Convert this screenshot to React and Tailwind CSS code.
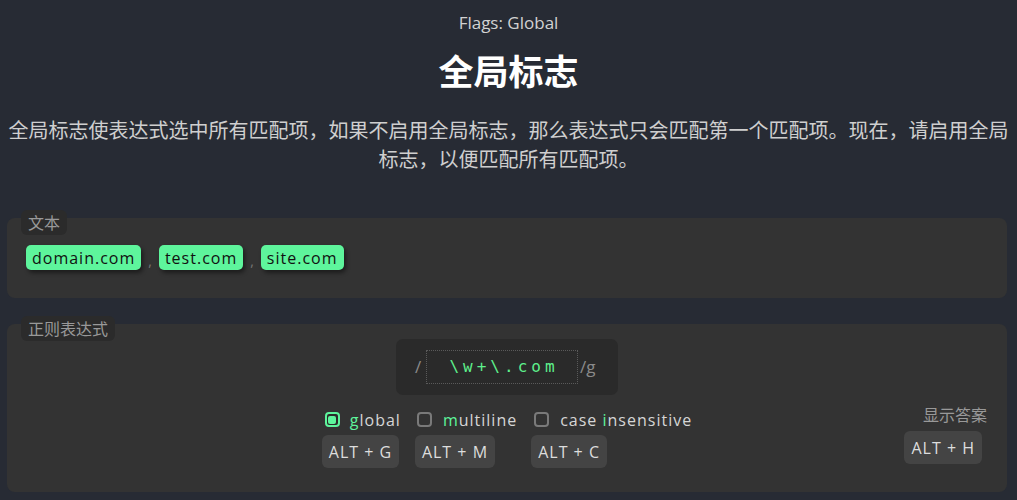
import React from "react";

const font = { fontFamily: '"Open Sans", "Noto Sans CJK SC", sans-serif' };

function Kbd({ children, className = "" }) {
  return (
    <span
      className={
        "inline-flex items-center h-[33px] px-[7px] rounded-[6px] bg-[#444444] text-[#dddddd] text-[16px] tracking-[1px] whitespace-pre " +
        className
      }
    >
      {children}
    </span>
  );
}

function Check({ checked }) {
  if (checked) {
    return (
      <span className="inline-flex w-[15px] h-[15px] rounded-[4px] border-2 border-[#5ef59c] p-[1.5px] bg-[#2b2b2b]">
        <span className="block w-full h-full rounded-[2px] bg-[#5ef59c]" />
      </span>
    );
  }
  return <span className="inline-block w-[15px] h-[15px] rounded-[4px] border-2 border-[#7a7a7a]" />;
}

function Chip({ children }) {
  return (
    <span className="inline-flex items-center h-[25px] px-[6px] rounded-[5px] bg-[#5ef59c] text-[#111] text-[16px] tracking-[1px] shadow-[2px_3px_4px_rgba(0,0,0,0.45)]">
      {children}
    </span>
  );
}

function Sep() {
  return <span className="text-[#777] text-[14px] mx-[7px] mt-[6px]">,</span>;
}

export default function App() {
  return (
    <div className="min-h-[500px] bg-[#272b34] px-[7px] pt-[11px] pb-[10px]" style={font}>
      <div className="text-center text-[17px] leading-[24px] text-[#d2d2d2]">Flags: Global</div>
      <h1 className="mt-[13px] text-center text-[35px] leading-[48px] font-bold text-white">全局标志</h1>
      <p className="mt-[20px] text-center text-[20px] leading-[29px] text-[#cfcfcf]">
        全局标志使表达式选中所有匹配项，如果不启用全局标志，那么表达式只会匹配第一个匹配项。现在，请启用全局标志，以便匹配所有匹配项。
      </p>

      <div className="relative mt-[44px] w-[1000px] h-[80px] rounded-[8px] bg-[#333333] pt-[26px] px-[19px]">
        <span className="absolute -top-[8px] left-[14px] h-[25px] px-[7px] flex items-center rounded-[6px] bg-[#2b2b2b] text-[16px] text-[#999999]">
          文本
        </span>
        <div className="flex items-center">
          <Chip>domain.com</Chip>
          <Sep />
          <Chip>test.com</Chip>
          <Sep />
          <Chip>site.com</Chip>
        </div>
      </div>

      <div className="relative mt-[26px] w-[1000px] h-[168px] rounded-[8px] bg-[#333333] pt-[15px]">
        <span className="absolute -top-[8px] left-[14px] h-[25px] px-[7px] flex items-center rounded-[6px] bg-[#2b2b2b] text-[16px] text-[#999999]">
          正则表达式
        </span>
        <div className="flex justify-center">
          <div className="flex items-center h-[56px] w-[222px] rounded-[7px] bg-[#2a2a2a] pl-[19px]">
            <span className="text-[#8a8a8a] text-[17px] w-[11px]">/</span>
            <div
              className="w-[152px] h-[34px] border border-dotted border-[#5a5a5a] flex items-center justify-center text-[#5ef08c] text-[16px] tracking-[4px] pl-[4px]"
              style={{ fontFamily: '"DejaVu Sans Mono", monospace' }}
            >
              \w+\.com
            </div>
            <span className="text-[#8a8a8a] text-[17px] ml-[2px]">/g</span>
          </div>
        </div>

        <div className="flex justify-center gap-[14px] mt-[14px]">
          <div className="flex flex-col items-start">
            <div className="flex items-center h-[21px] ml-[3px] gap-[10px] text-[16px] tracking-[1px] text-[#d6d6d6]">
              <Check checked />
              <span>
                <span className="text-[#5ef59c]">g</span>lobal
              </span>
            </div>
            <Kbd className="mt-[5px]">ALT + G</Kbd>
          </div>
          <div className="flex flex-col items-start">
            <div className="flex items-center h-[21px] ml-[2px] gap-[11px] text-[16px] tracking-[1px] text-[#d6d6d6]">
              <Check />
              <span>
                <span className="text-[#5ef59c]">m</span>ultiline
              </span>
            </div>
            <Kbd className="mt-[5px]">ALT + M</Kbd>
          </div>
          <div className="flex flex-col items-start">
            <div className="flex items-center h-[21px] ml-[3px] gap-[11px] text-[16px] tracking-[1px] text-[#d6d6d6]">
              <Check />
              <span>
                case <span className="text-[#5ef59c]">i</span>nsensitive
              </span>
            </div>
            <Kbd className="mt-[5px]">ALT + C</Kbd>
          </div>
        </div>

        <div className="absolute right-[20px] top-[79px] flex flex-col items-end">
          <span className="text-[16px] leading-[24px] text-[#999999]">显示答案</span>
          <Kbd className="mt-[4px] mr-[5px]">ALT + H</Kbd>
        </div>
      </div>
    </div>
  );
}
